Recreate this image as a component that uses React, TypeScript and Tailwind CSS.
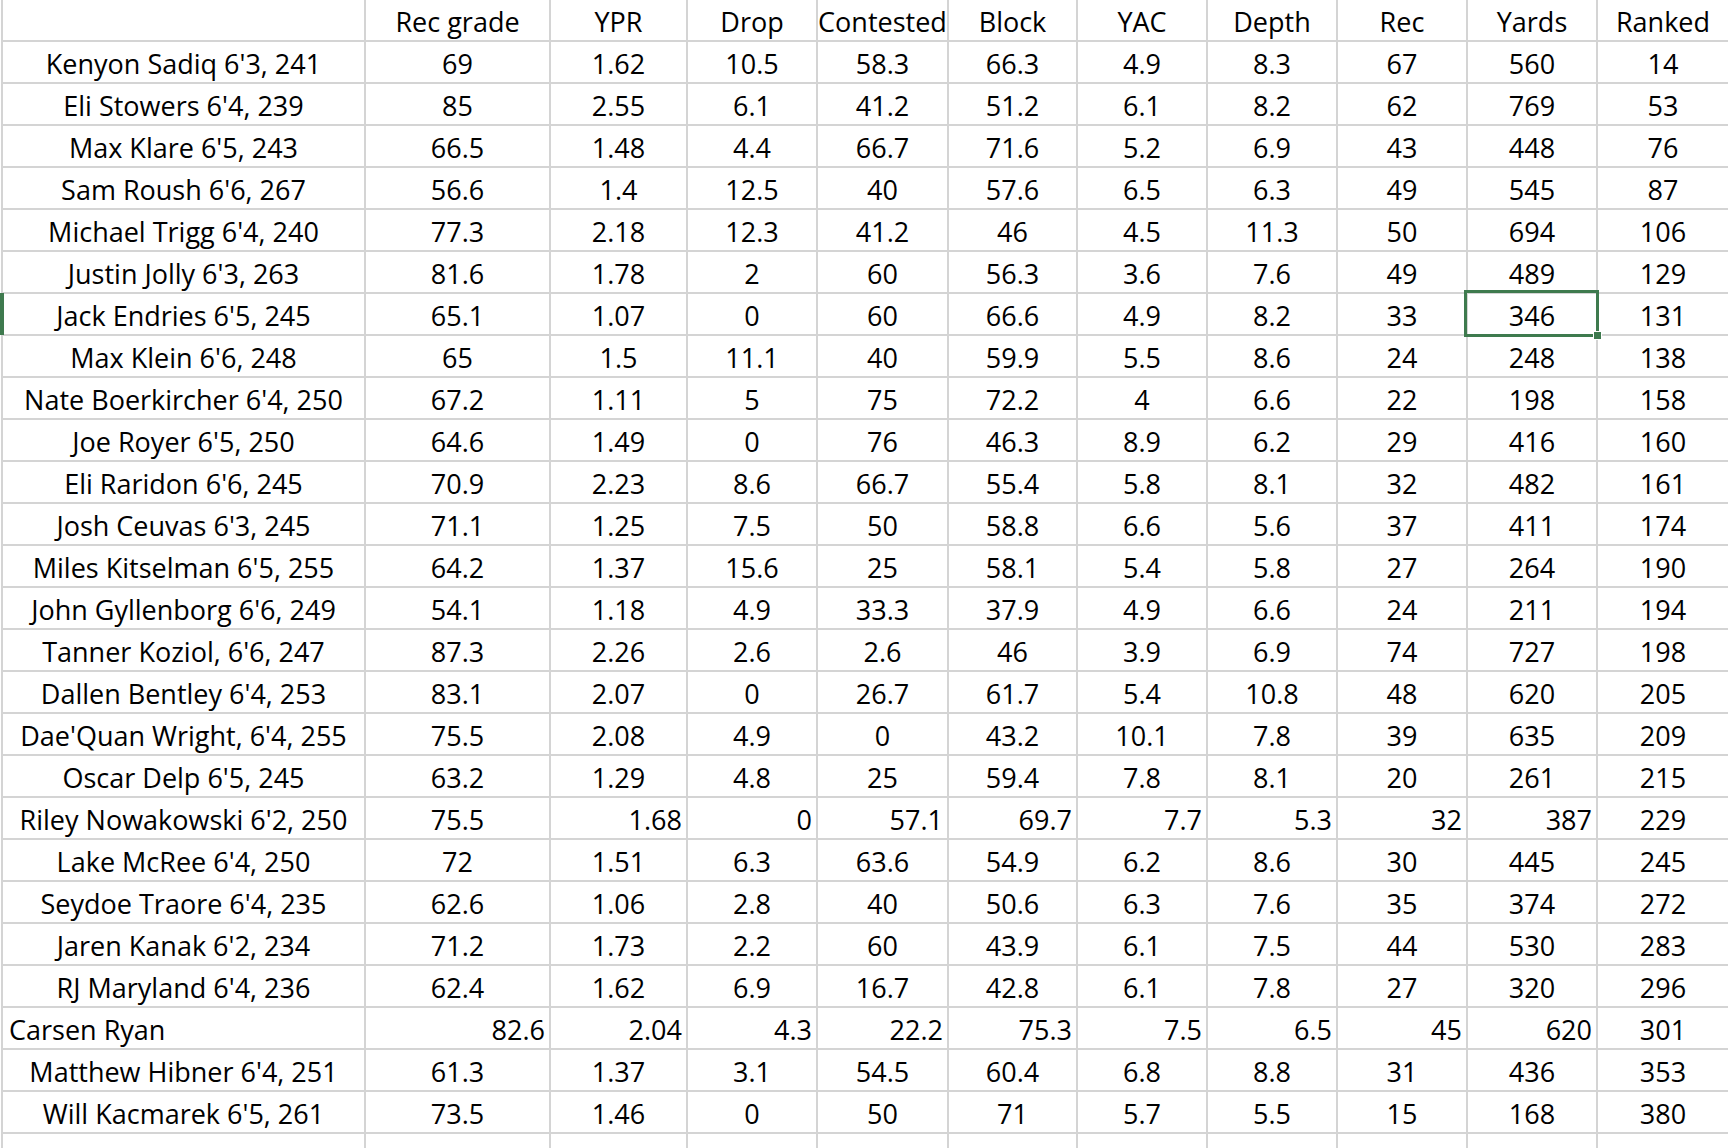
import React from "react";

type Row = { cells: (string | number)[]; align?: "right" | "carsen" };

const header = ["", "Rec grade", "YPR", "Drop", "Contested", "Block", "YAC", "Depth", "Rec", "Yards", "Ranked"];

const rows: Row[] = [
  { cells: ["Kenyon Sadiq 6'3, 241", 69, 1.62, 10.5, 58.3, 66.3, 4.9, 8.3, 67, 560, 14] },
  { cells: ["Eli Stowers 6'4, 239", 85, 2.55, 6.1, 41.2, 51.2, 6.1, 8.2, 62, 769, 53] },
  { cells: ["Max Klare 6'5, 243", 66.5, 1.48, 4.4, 66.7, 71.6, 5.2, 6.9, 43, 448, 76] },
  { cells: ["Sam Roush 6'6, 267", 56.6, 1.4, 12.5, 40, 57.6, 6.5, 6.3, 49, 545, 87] },
  { cells: ["Michael Trigg 6'4, 240", 77.3, 2.18, 12.3, 41.2, 46, 4.5, 11.3, 50, 694, 106] },
  { cells: ["Justin Jolly 6'3, 263", 81.6, 1.78, 2, 60, 56.3, 3.6, 7.6, 49, 489, 129] },
  { cells: ["Jack Endries 6'5, 245", 65.1, 1.07, 0, 60, 66.6, 4.9, 8.2, 33, 346, 131] },
  { cells: ["Max Klein 6'6, 248", 65, 1.5, 11.1, 40, 59.9, 5.5, 8.6, 24, 248, 138] },
  { cells: ["Nate Boerkircher 6'4, 250", 67.2, 1.11, 5, 75, 72.2, 4, 6.6, 22, 198, 158] },
  { cells: ["Joe Royer 6'5, 250", 64.6, 1.49, 0, 76, 46.3, 8.9, 6.2, 29, 416, 160] },
  { cells: ["Eli Raridon 6'6, 245", 70.9, 2.23, 8.6, 66.7, 55.4, 5.8, 8.1, 32, 482, 161] },
  { cells: ["Josh Ceuvas 6'3, 245", 71.1, 1.25, 7.5, 50, 58.8, 6.6, 5.6, 37, 411, 174] },
  { cells: ["Miles Kitselman 6'5, 255", 64.2, 1.37, 15.6, 25, 58.1, 5.4, 5.8, 27, 264, 190] },
  { cells: ["John Gyllenborg 6'6, 249", 54.1, 1.18, 4.9, 33.3, 37.9, 4.9, 6.6, 24, 211, 194] },
  { cells: ["Tanner Koziol, 6'6, 247", 87.3, 2.26, 2.6, 2.6, 46, 3.9, 6.9, 74, 727, 198] },
  { cells: ["Dallen Bentley 6'4, 253", 83.1, 2.07, 0, 26.7, 61.7, 5.4, 10.8, 48, 620, 205] },
  { cells: ["Dae'Quan Wright, 6'4, 255", 75.5, 2.08, 4.9, 0, 43.2, 10.1, 7.8, 39, 635, 209] },
  { cells: ["Oscar Delp 6'5, 245", 63.2, 1.29, 4.8, 25, 59.4, 7.8, 8.1, 20, 261, 215] },
  { cells: ["Riley Nowakowski 6'2, 250", 75.5, 1.68, 0, 57.1, 69.7, 7.7, 5.3, 32, 387, 229], align: "right" },
  { cells: ["Lake McRee 6'4, 250", 72, 1.51, 6.3, 63.6, 54.9, 6.2, 8.6, 30, 445, 245] },
  { cells: ["Seydoe Traore 6'4, 235", 62.6, 1.06, 2.8, 40, 50.6, 6.3, 7.6, 35, 374, 272] },
  { cells: ["Jaren Kanak 6'2, 234", 71.2, 1.73, 2.2, 60, 43.9, 6.1, 7.5, 44, 530, 283] },
  { cells: ["RJ Maryland 6'4, 236", 62.4, 1.62, 6.9, 16.7, 42.8, 6.1, 7.8, 27, 320, 296] },
  { cells: ["Carsen Ryan", 82.6, 2.04, 4.3, 22.2, 75.3, 7.5, 6.5, 45, 620, 301], align: "carsen" },
  { cells: ["Matthew Hibner 6'4, 251", 61.3, 1.37, 3.1, 54.5, 60.4, 6.8, 8.8, 31, 436, 353] },
  { cells: ["Will Kacmarek 6'5, 261", 73.5, 1.46, 0, 50, 71, 5.7, 5.5, 15, 168, 380] },
];

function cellAlign(row: Row, ci: number): string {
  if (row.align === "right") {
    if (ci >= 2 && ci <= 9) return "justify-end pr-[4px]";
    return "justify-center";
  }
  if (row.align === "carsen") {
    if (ci === 0) return "justify-start pl-[6px]";
    if (ci >= 1 && ci <= 9) return "justify-end pr-[4px]";
    return "justify-center";
  }
  return "justify-center";
}

export default function App() {
  return (
    <div
      className="relative h-[1148px] w-[1728px] overflow-hidden bg-white pl-[1px] text-black"
      style={{ fontFamily: "'Open Sans', 'Liberation Sans', sans-serif" }}
    >
      <div className="grid grid-cols-[361px_183px_135px_128px_129px_127px_128px_128px_128px_128px_130px] auto-rows-[40px] gap-[2px] bg-[#d4d4d4] pl-[2px] text-[27px] leading-none">
        {header.map((h, i) => (
          <div key={"h" + i} className="flex items-center justify-center whitespace-nowrap bg-white pt-[2px]">
            {h}
          </div>
        ))}
        {rows.map((row, ri) =>
          row.cells.map((c, ci) => {
            const selected = ri === 6 && ci === 9;
            return (
              <div
                key={ri + "-" + ci}
                className={
                  "flex items-center whitespace-nowrap bg-white pt-[3px] " +
                  cellAlign(row, ci) +
                  (selected ? " relative" : "")
                }
              >
                {c}
                {selected && (
                  <div className="pointer-events-none absolute -left-[4px] -right-[3px] -top-[4px] -bottom-[3px] z-10 border-[3px] border-[#3e7a4e]">
                    <div className="absolute -right-[6px] -bottom-[6px] h-[9px] w-[9px] border border-white bg-[#3e7a4e]" />
                  </div>
                )}
              </div>
            );
          })
        )}
        {Array.from({ length: 11 }).map((_, i) => (
          <div key={"e" + i} className="bg-white" />
        ))}
      </div>
      <div className="absolute left-0 top-[293px] h-[42px] w-[4px] bg-[#3e7a4e]" />
    </div>
  );
}
